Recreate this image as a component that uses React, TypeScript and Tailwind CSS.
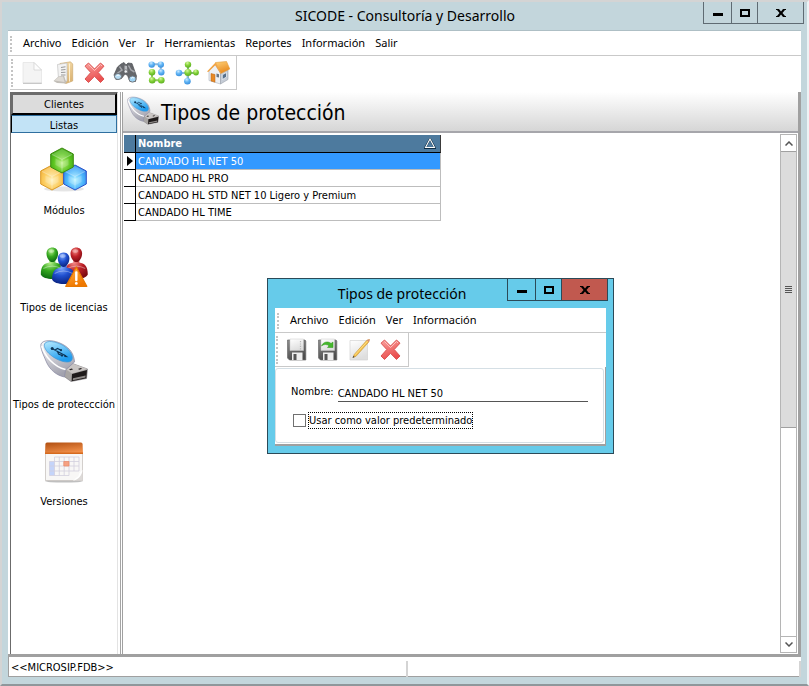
import type { ReactNode } from "react";
import clsx from "clsx";

const MAIN_MENU = ["Archivo", "Edición", "Ver", "Ir", "Herramientas", "Reportes", "Información", "Salir"];
const DIALOG_MENU = ["Archivo", "Edición", "Ver", "Información"];
const ROWS = ["CANDADO HL NET 50", "CANDADO HL PRO", "CANDADO HL STD NET 10 Ligero y Premium", "CANDADO HL TIME"];

/* ---------- icons ---------- */

function Svg({ size, className, children }: { size: number; className?: string; children: ReactNode }) {
  return (
    <svg viewBox={`0 0 ${size} ${size}`} className={clsx("shrink-0", className)} aria-hidden="true">
      {children}
    </svg>
  );
}

function Gradients() {
  const pairs: [string, string, string][] = [
    ["gOrange", "#ffb547", "#f07800"],
    ["gRed", "#f9a09c", "#ea4f4f"],
    ["gPaper", "#ffffff", "#dedede"],
    ["gMetal", "#fafafc", "#a2a2ae"],
    ["gScreen", "#b9ebff", "#1f9df0"],
    ["gHeader", "#b04e10", "#f2904a"],
    ["gDisk", "#8d8d8d", "#4d4d4d"],
    ["gFolder", "#f9e3b4", "#ddb676"],
    ["gRoof", "#ffd27a", "#e98a1e"],
  ];
  const balls: [string, string, string, string][] = [
    ["bGreen", "#b5f08a", "#35a81f", "#0c6b10"],
    ["bRed", "#f58a86", "#bf2228", "#7d0a12"],
    ["bBlue", "#7fa9ff", "#1f4fcf", "#0a2380"],
    ["bLime", "#d8f7a0", "#84d33a", "#5cae20"],
    ["bSky", "#cdeaff", "#5fb4f5", "#3a8fdc"],
    ["cGreen", "#b8f07c", "#5cc41f", "#2f9410"],
    ["cYellow", "#fff0b4", "#fbcb5c", "#eda62e"],
    ["cBlue", "#b4f4ff", "#4bb4fb", "#2166dc"],
  ];
  return (
    <svg className="absolute size-0" aria-hidden="true">
      <defs>
        {pairs.map(([id, a, b]) => (
          <linearGradient key={id} id={id} x1="0" y1="0" x2="0.4" y2="1">
            <stop offset="0" stopColor={a} />
            <stop offset="1" stopColor={b} />
          </linearGradient>
        ))}
        {balls.map(([id, a, b, c]) => (
          <radialGradient key={id} id={id} cx={id[0] === "c" ? "0.5" : "0.4"} cy={id[0] === "c" ? "0.6" : "0.25"} r="0.75">
            <stop offset="0" stopColor={a} />
            <stop offset="0.5" stopColor={b} />
            <stop offset="1" stopColor={c} />
          </radialGradient>
        ))}
      </defs>
    </svg>
  );
}

function Cube({ x, y, fill, edge }: { x: number; y: number; fill: string; edge: string }) {
  return (
    <g transform={`translate(${x} ${y})`} strokeLinejoin="round">
      <path d="M0-12.5 11.3-6.5V6.5L0 12.5-11.3 6.5V-6.5Z" fill={`url(#${fill})`} stroke={edge} strokeWidth="1" />
      <path d="M0-11.5 10-6 0-1-10-6Z" fill="#fff" opacity="0.18" />
      <path d="M0-1V11M0-1-10-6M0-1 10-6" stroke="#fff" strokeWidth="0.7" opacity="0.45" />
      <path d="M-6.5-2 0 1.500 6.500-2V4.500L0 8-6.500 4.500Z" fill="#fff" opacity="0.18" />
    </g>
  );
}

function ModulesIcon() {
  return (
    <Svg size={48} className="size-12">
      <ellipse cx="24" cy="44" rx="20" ry="2.5" fill="#000" opacity="0.1" />
      <Cube x={12} y={32.5} fill="cYellow" edge="#d99a2a" />
      <Cube x={35} y={32.5} fill="cBlue" edge="#2b52c8" />
      <Cube x={22} y={15.5} fill="cGreen" edge="#3f8d12" />
    </Svg>
  );
}

function Person({ x, y, fill }: { x: number; y: number; fill: string }) {
  return (
    <g transform={`translate(${x} ${y})`}>
      <path d="M-3 3H3V8C8 9 11.5 11 11.5 20C9 26-9 26-11.5 20C-11.5 11-8 9-3 8Z" fill={`url(#${fill})`} />
      <path d="M-5.800-1C-5.800-9 5.800-9 5.800-1C5.800 3 3 7.500 0 7.500C-3 7.500-5.800 3-5.800-1Z" fill={`url(#${fill})`} />
      <path d="M-9 14Q0 9 9 14" stroke="#fff" strokeWidth="1.2" fill="none" opacity="0.35" />
      <ellipse cx="-1" cy="-3.6" rx="3" ry="1.8" fill="#fff" opacity="0.35" />
    </g>
  );
}

function LicensesIcon() {
  return (
    <Svg size={48} className="size-12">
      <Person x={12.3} y={12.6} fill="bGreen" />
      <Person x={36.3} y={12.6} fill="bRed" />
      <Person x={23.6} y={17.5} fill="bBlue" />
      <path d="M36.3 25 46.8 44.4H25.8Z" fill="url(#gOrange)" stroke="#e87800" strokeWidth="1.2" strokeLinejoin="round" />
      <path d="M36.3 30.5V38" stroke="#fff" strokeWidth="2.4" strokeLinecap="round" />
      <circle cx="36.3" cy="41.4" r="1.4" fill="#fff" />
    </Svg>
  );
}

function UsbIcon({ className }: { className: string }) {
  return (
    <Svg size={48} className={className}>
      <path d="M24 29 31 24 47.5 30 46.5 39.5 31 42.5 23.5 37Z" fill="#a9a6a4" stroke="#77737a" strokeWidth="0.6" />
      <path d="M24 29 31 24 47.5 30 32 34.6Z" fill="#c9c5c3" />
      <path d="M32 35 47 31 46.3 39.3 31.6 42.2Z" fill="#1f1b1b" />
      <path d="M33 39.2 45.6 36.6 45.4 38.6 32.8 41.2Z" fill="#8e8a88" />
      <path d="m29 30.4 2.600-1 1.600.8-2.600 1ZM38 30l2.600-1 1.600.8-2.600 1Z" fill="#2a2626" />
      <path
        d="M1 5C3 .5 13 .5 22 5C30 9 34 15 34.5 23L25.5 31L24.5 38C17 36.5 9.5 31 6 22C3.5 16 0 9 1 5Z"
        fill="url(#gMetal)"
        stroke="#8e8ea6"
        strokeWidth="0.8"
      />
      <path d="M25.5 30.5C14 28 4.5 17 1.8 7" stroke="#fff" strokeWidth="1.6" fill="none" />
      <path d="M4.5 5C6 1 16 2 24 7C31 11.5 34.5 19 31 22C27 25 16 21 10 15.5C6.5 12.5 3.5 8 4.5 5Z" fill="url(#gScreen)" stroke="#3f95d2" strokeWidth="0.7" />
      <path d="M12 9.5 26 17M15 11 17.5 9.5 20.5 11M17.5 12.5 18.5 15 22 16.5" stroke="#0d3557" strokeWidth="1.1" fill="none" />
      <path d="m24.500 15.500 4 2.800-4.200-.2Z" fill="#0d3557" />
      <circle cx="12.2" cy="9.5" r="1.5" fill="#0d3557" />
      <circle cx="21" cy="11.2" r="1.1" fill="#0d3557" />
      <circle cx="22" cy="16.6" r="1.1" fill="#0d3557" />
    </Svg>
  );
}

function CalendarIcon() {
  return (
    <Svg size={48} className="size-12">
      <ellipse cx="24" cy="45" rx="19" ry="1.6" fill="#000" opacity="0.25" />
      <path d="M5.5 17H42.5V44.5H5.5Z" fill="#f8f7f6" stroke="#c9c4c0" strokeWidth="0.8" />
      <path d="M7 6.5H41Q42.5 6.5 42.6 8L43 18H5L5.4 8Q5.5 6.5 7 6.5Z" fill="url(#gHeader)" />
      <path d="M5 16.5H43V18H5Z" fill="#d66a1e" />
      <path d="M9.5 25.5H14.5V39.5H9.5Z" fill="#c4d4fa" />
      <path
        d="M14.5 21H39V35H9.5M9.5 25.5H39M9.5 30H39M9.5 25.5V39.5H29V21M14.5 21V39.5M19.3 21V39.5M24.2 21V39.5M34 21V35"
        stroke="#d2cfde"
        strokeWidth="0.8"
        fill="none"
      />
      <path d="M23.8 25.5H29V30H23.8Z" fill="#f5a183" stroke="#ea8a68" strokeWidth="0.7" />
      <path d="M42.5 34C41 39 38 42 33 44.5H42.5Z" fill="#dddad8" />
      <path d="M42.5 34C40 36 39 37 38.5 40C37 41 35 43 33 44.5C38 44 42 40 42.5 34Z" fill="#fff" />
    </Svg>
  );
}

function NewIcon() {
  return (
    <Svg size={24} className="size-6">
      <path d="M3 1.5H14L21.5 9V22H3Z" fill="#f4f4f4" stroke="#e4e4e4" strokeWidth="0.8" />
      <path d="M14 1.5V9H21.5Z" fill="#fdfdfd" stroke="#cfcfcf" strokeWidth="0.7" />
      <path d="M3 22.3H21.8" stroke="#bdbdbd" />
    </Svg>
  );
}

function OpenIcon() {
  return (
    <Svg size={24} className="size-6">
      <path d="M9 2.5 19.5.8 21.7 3V20L15 22.5 9 20Z" fill="url(#gFolder)" stroke="#caa468" strokeWidth="0.6" />
      <path d="M6.5 3.5 16 2V20.5L7.5 18Z" fill="#f3f3f3" stroke="#b9b9b9" strokeWidth="0.6" />
      <path d="M10 6.5 14.5 5.8M10 9 14.5 8.5M10 11.5 14.5 11.2M10 14 14.5 14" stroke="#9a9a9a" strokeWidth="1.1" />
      <path d="M2.5 20 7.5 15.5 13 14.500 15.500 22.500 6 22Z" fill="#c2beb8" />
      <path d="M3.5 19.5 7.8 16 12 15.500 13.500 21Z" fill="#dedad4" />
      <path d="M18.5 2.5V20.5" stroke="#fff4d8" strokeWidth="0.9" />
    </Svg>
  );
}

function DeleteIcon() {
  return (
    <Svg size={24} className="size-6">
      <path
        d="M6.5 2 12.5 8 18.5 2 22 5.200 16.200 11.500 22 18 18.500 21.500 12.500 15.300 6.500 21.500 3 18 8.800 11.500 3 5.200Z"
        fill="url(#gRed)"
        stroke="#dc5452"
        strokeWidth="1"
        strokeLinejoin="round"
      />
      <path d="M6.5 3.5 12.5 9.6 18.5 3.5 20 5" stroke="#ffc4c0" strokeWidth="1" fill="none" />
    </Svg>
  );
}

function BinocularsIcon() {
  return (
    <Svg size={24} className="size-6">
      <path d="M8 3 11 1.5 13 4 15 2 19 2.5 23.5 15 22.5 20.5H17L14.5 14.5 12 13 8.5 17.5 3 18.5 1 14 4.5 6Z" fill="#65676b" stroke="#4e5054" strokeWidth="0.7" />
      <path d="M6.5 5.5 9 9 4 12.5M15.5 4.5 18 9 21.5 11" stroke="#a4a6ab" strokeWidth="1.5" fill="none" />
      <path d="M11.5 4.5 14 5 14.5 12 11.5 12Z" fill="#b9bbbf" />
      <circle cx="12.8" cy="10.5" r="1.7" fill="#eceef0" stroke="#505257" strokeWidth="0.6" />
      <ellipse cx="5" cy="15.5" rx="3.5" ry="3" fill="#b7ddf4" stroke="#70747a" strokeWidth="1" />
      <ellipse cx="19.5" cy="18" rx="3.6" ry="3.1" fill="#9ed2f2" stroke="#70747a" strokeWidth="1" />
      <path d="M3.5 14.8Q5 13.5 6.5 14.5M18 17.3Q19.5 16 21 17" stroke="#fff" strokeWidth="0.9" fill="none" />
    </Svg>
  );
}

function NodesIcon() {
  return (
    <Svg size={24} className="size-6">
      <path d="M7.7 3.3H16.8V11" stroke="#8bb7dc" strokeWidth="2" fill="none" />
      <path d="M8 11V19.3H17.3" stroke="#8fc85c" strokeWidth="2" fill="none" />
      <circle cx="7.7" cy="3.6" r="3.2" fill="url(#bSky)" />
      <circle cx="16.8" cy="3.6" r="3.2" fill="url(#bSky)" />
      <circle cx="17.3" cy="11.3" r="3.2" fill="url(#bSky)" />
      <circle cx="8" cy="11.3" r="3.3" fill="url(#bLime)" />
      <circle cx="8.2" cy="19.3" r="3.3" fill="url(#bLime)" />
      <circle cx="17.3" cy="19.3" r="3.3" fill="url(#bLime)" />
    </Svg>
  );
}

function NetworkIcon() {
  return (
    <Svg size={24} className="size-6">
      <path d="M13 3.5V20M4.3 12H21" stroke="#7fba6c" strokeWidth="2" fill="none" />
      <path d="M4.3 12H10M12.6 14V20" stroke="#8bb7dc" strokeWidth="2" fill="none" />
      <circle cx="13" cy="3.6" r="3.2" fill="url(#bLime)" />
      <circle cx="21" cy="11.5" r="2.9" fill="url(#bLime)" />
      <circle cx="13" cy="11.5" r="3.6" fill="url(#bLime)" />
      <circle cx="4" cy="12" r="3.3" fill="url(#bSky)" />
      <circle cx="12.4" cy="20.2" r="3.3" fill="url(#bSky)" />
    </Svg>
  );
}

function HouseIcon() {
  return (
    <Svg size={24} className="size-6">
      <path d="M3 10 9 3.5 14.5 12V23L3 19.5Z" fill="#eef1f5" stroke="#a9b0b8" strokeWidth="0.6" />
      <path d="M14.5 12 22 8V18.5L14.5 23Z" fill="#c5ccd6" stroke="#98a0aa" strokeWidth="0.6" />
      <path d="M9.5 1.5 20.5.5 23.8 8 14.8 12.5Z" fill="url(#gRoof)" stroke="#e29a3a" strokeWidth="0.6" />
      <path d="M9.5 1.5 1 10.5 2.3 11 9.3 4.3 14.3 12.5 15 12Z" fill="#f2a545" />
      <path d="M5 12.5 9 13.5V21.2L5 20Z" fill="#e88a26" stroke="#b9661a" strokeWidth="0.5" />
      <path d="M10.5 12.5 13 13.2V16.5L10.5 16Z" fill="#6a7684" />
      <path d="M16.3 13.8 20.5 11.5V16L16.3 18.5Z" fill="#56708c" stroke="#f6f8fa" strokeWidth="0.7" />
    </Svg>
  );
}

function SaveIcon({ refresh }: { refresh?: boolean }) {
  return (
    <Svg size={24} className="size-6">
      <path d="M2.5 2H20L20.800 3V22H4.500L2.500 20Z" fill="url(#gDisk)" stroke="#6b6b6b" strokeWidth="0.7" />
      <path d="M5 1H18.500V12.500H5Z" fill="url(#gPaper)" stroke="#c8c8c8" strokeWidth="0.5" />
      {refresh ? (
        <path d="M5.500 8C7 3.500 12.500 3 15 5.500L17 4V9.500H11.500L13 7.800C11 6 8 6 5.500 8Z" fill="#45b82c" stroke="#2c9418" strokeWidth="0.5" />
      ) : (
        <path d="M15.500 3V12" stroke="#b5b5b5" strokeWidth="1.2" strokeDasharray="1.2 1.200" />
      )}
      <path d="M7 14.5H17.5V22H7Z" fill="#eeeeee" />
      <path d="M8.5 16H11.5V22H8.5Z" fill="#555" />
    </Svg>
  );
}

function EditIcon() {
  return (
    <Svg size={24} className="size-6">
      <path d="M3 2.5H20.5V22H3Z" fill="url(#gPaper)" stroke="#d2d2d2" strokeWidth="0.7" />
      <path d="M19.8 2.300 22.500 1.500 21.800 4 9 18.300 6 19.500 7.200 16.500Z" fill="#f5c04a" stroke="#b98724" strokeWidth="0.5" />
      <path d="M8 16.8 20.5 3.2" stroke="#ffe9a0" strokeWidth="0.7" />
      <path d="M5.500 20 6.500 17.800 7.700 19Z" fill="#444" />
      <path d="m19.800 2.100 2.700-.9-.6 3Z" fill="#d88a7a" />
    </Svg>
  );
}

/* ---------- window pieces ---------- */

function WindowButtons({ dialog }: { dialog?: boolean }) {
  return (
    <div
      className={clsx(
        "flex h-[22px] divide-x border border-t-0",
        dialog ? "mr-[5px] divide-[#2b4a58] border-[#2b4a58]" : "mr-[3px] divide-[#5f6b73] border-[#5f6b73]",
      )}
    >
      <button aria-label="Minimizar" className="flex w-7 items-center justify-center">
        <span className="mt-1 h-[3px] w-[10px] bg-black" />
      </button>
      <button aria-label="Maximizar" className="flex w-[26px] items-center justify-center">
        <span className="h-2 w-[10px] border-2 border-black" />
      </button>
      <button aria-label="Cerrar" className={clsx("flex w-[45px] items-center justify-center", dialog && "bg-[#c1594f]")}>
        <svg viewBox="0 0 10 8" className="h-2 w-[10px]">
          <path d="M0 0H3L5 2.5 7 0H10V1H9L6.5 4 9 7H10V8H7L5 5.5 3 8H0V7H1L3.5 4 1 1H0Z" fill="#000" />
        </svg>
      </button>
    </div>
  );
}

function Grip({ className }: { className: string }) {
  return <span className={clsx("w-0 border-l-2 border-dotted border-[#c4c4c4]", className)} />;
}

function MenuBar({ items }: { items: string[] }) {
  return (
    <nav className="flex h-[25px] items-center border-b border-[#c9c9c9] bg-white px-[2px] pt-px font-['Noto_Sans',sans-serif] text-[11px]">
      <Grip className="h-4" />
      <div className="flex gap-[10px] pl-[11px]">
        {items.map((item) => (
          <button key={item}>{item}</button>
        ))}
      </div>
    </nav>
  );
}

function Toolbar({ items }: { items: [string, ReactNode][] }) {
  return (
    <div className="flex h-[34px] w-fit items-center gap-[7px] border-r border-b border-[#c9c9c9] pr-[6px] pl-px">
      <Grip className="h-7" />
      {items.map(([label, icon]) => (
        <button key={label} aria-label={label}>
          {icon}
        </button>
      ))}
    </div>
  );
}

function SidebarItem({ label, icon }: { label: string; icon: ReactNode }) {
  return (
    <button className="flex h-[97px] w-full flex-col items-center gap-[10px] pt-3 leading-4 whitespace-nowrap">
      {icon}
      <span>{label}</span>
    </button>
  );
}

function Sidebar() {
  return (
    <aside className="flex w-[113px] shrink-0 flex-col border-r border-[#a5a5a5] pl-[2px]">
      <div className="mr-[2px] flex flex-1 flex-col border-t border-r border-l border-t-[#6b6b6b] border-r-[#e3e3e3] border-l-[#6b6b6b]">
        <button className="h-[22px] border-2 border-t-[#6b6b6b] border-r-black border-b-black border-l-[#6b6b6b] bg-[#dcdcdc] pt-px leading-4">
          Clientes
        </button>
        <button className="h-[18px] border border-[#2f6f9f] border-l-black bg-[#c2e3f6] pt-[3px] leading-[13px]">
          Listas
        </button>
        <SidebarItem label="Módulos" icon={<ModulesIcon />} />
        <SidebarItem label="Tipos de licencias" icon={<LicensesIcon />} />
        <SidebarItem label="Tipos de proteccción" icon={<UsbIcon className="size-12" />} />
        <SidebarItem label="Versiones" icon={<CalendarIcon />} />
      </div>
    </aside>
  );
}

function ProtectionTable() {
  return (
    <table className="w-[317px] border-separate border-spacing-0 text-left">
      <thead>
        <tr className="h-[18px] bg-[#4d7a9e] text-white">
          <th className="w-3 border-r border-b border-black p-0" aria-label="Selección" />
          <th className="border-r border-b border-black border-r-[#3a3a3a] py-0 pr-1 pl-[2px]">
            <span className="flex items-center justify-between leading-4">
              Nombre
              <svg viewBox="0 0 12 11" className="h-[11px] w-3">
                <path d="M6 1 11 10H1Z" fill="none" stroke="#0c2c44" strokeWidth="2" />
                <path d="M6 1 10.500 9.500H1.500Z" fill="none" stroke="#fff" strokeWidth="1.1" />
              </svg>
            </span>
          </th>
        </tr>
      </thead>
      <tbody>
        {ROWS.map((name, i) => (
          <tr key={name} className={clsx("h-[17px]", i === 0 && "bg-[#3399ff] text-white")}>
            <td className="border-r border-b border-black bg-white p-0">
              {i === 0 && (
                <svg viewBox="0 0 6 10" className="ml-[3px] h-[10px] w-[6px]">
                  <path d="M0 0 6 5 0 10Z" fill="#000" />
                </svg>
              )}
            </td>
            <td className="border-r border-b border-[#bdbdbd] pt-[2px] pb-0 pl-[2px] leading-[14px] whitespace-nowrap">{name}</td>
          </tr>
        ))}
      </tbody>
    </table>
  );
}

function Scrollbar() {
  return (
    <div className="mt-px mr-px mb-px flex w-[17px] shrink-0 flex-col border border-[#b5b5b5]">
      <button aria-label="Subir" className="flex h-4 items-center justify-center">
        <svg viewBox="0 0 8 5" className="h-[5px] w-2">
          <path d="M.5 4.5 4 1 7.5 4.5" fill="none" stroke="#555" strokeWidth="1.5" />
        </svg>
      </button>
      <div className="flex flex-[276] flex-col items-center justify-center gap-px border-y border-[#a0a0a0] bg-[#dcdcdc]">
        {[0, 1, 2, 3].map((n) => (
          <span key={n} className="h-px w-[7px] bg-[#555]" />
        ))}
      </div>
      <div className="flex-[209]" />
      <button aria-label="Bajar" className="flex h-4 items-center justify-center border-t border-[#b5b5b5]">
        <svg viewBox="0 0 8 5" className="h-[5px] w-2">
          <path d="M.5.5 4 4 7.5.5" fill="none" stroke="#555" strokeWidth="1.5" />
        </svg>
      </button>
    </div>
  );
}

function ProtectionDialog() {
  return (
    <section
      role="dialog"
      aria-label="Tipos de protección"
      className="absolute top-[276px] left-[265px] w-[347px] border border-[#2b4a58] bg-[#66cbea] pb-[7px]"
    >
      <header className="flex h-[29px] items-start">
        <h2 className="flex-1 pl-[29px] text-center font-['Noto_Sans',sans-serif] text-[14px] leading-[30px]">Tipos de protección</h2>
        <WindowButtons dialog />
      </header>
      <div className="mx-[7px] bg-white">
        <MenuBar items={DIALOG_MENU} />
        <Toolbar
          items={[
            ["Guardar", <SaveIcon />],
            ["Guardar y nuevo", <SaveIcon refresh />],
            ["Editar", <EditIcon />],
            ["Eliminar", <DeleteIcon />],
          ]}
        />
        <div className="border-r border-b-2 border-[#a0a0a0] pt-px pr-px pb-px">
          <form className="rounded-[3px] border border-[#d5dfe5] pt-[13px] pr-[15px] pb-[13px] pl-[15px]">
            <div className="flex h-5 items-center gap-1">
              <label htmlFor="nombre" className="leading-4">Nombre:</label>
              <input
                id="nombre"
                defaultValue="CANDADO HL NET 50"
                className="h-5 min-w-0 flex-1 border-b border-[#555] pt-1 outline-none"
              />
            </div>
            <label className="mt-[10px] flex h-[17px] items-center gap-[2px]">
              <input type="checkbox" className="ml-[2px] size-[13px] appearance-none border border-[#707070] bg-white" />
              <span className="border border-dotted border-black leading-[15px] whitespace-nowrap">
                Usar como valor predeterminado
              </span>
            </label>
          </form>
        </div>
      </div>
    </section>
  );
}

export default function App() {
  return (
    <div className="relative flex min-h-screen flex-col border-2 border-t-[#d4d4d4] border-r-[#eef3f5] border-b-[#8f979b] border-l-[#d4d4d4] bg-[#c3d6dc] font-['DejaVu_Sans_Condensed','DejaVu_Sans',sans-serif] text-[11px] text-black">
      <Gradients />
      <header className="flex h-7 items-start">
        <h1 className="flex-1 pl-[105px] text-center font-['Noto_Sans',sans-serif] text-[14px] leading-7">
          SICODE - Consultoría y Desarrollo
        </h1>
        <WindowButtons />
      </header>

      <div className="mx-[6px] mb-[7px] flex flex-1 flex-col border-t border-[#aebfc5] bg-white">
        <MenuBar items={MAIN_MENU} />
        <div className="pl-[2px]">
          <Toolbar
            items={[
              ["Nuevo", <NewIcon />],
              ["Abrir", <OpenIcon />],
              ["Eliminar", <DeleteIcon />],
              ["Buscar", <BinocularsIcon />],
              ["Organizar", <NodesIcon />],
              ["Relaciones", <NetworkIcon />],
              ["Inicio", <HouseIcon />],
            ]}
          />
        </div>

        <div className="flex flex-1 border-b-[3px] border-[#a0a0a0] pt-[2px]">
          <Sidebar />
          <main className="ml-px flex min-w-0 flex-1 flex-col border-r-[3px] border-l border-[#a0a0a0]">
            <div className="flex h-[41px] shrink-0 items-center border-b-2 border-[#a6a6ab] bg-linear-to-b from-white to-[#d6d6d6] pl-1">
              <UsbIcon className="size-8" />
              <h2 className="pt-1 pl-[2px] text-[21px]">Tipos de protección</h2>
            </div>
            <div className="flex flex-1">
              <div className="min-w-0 flex-1 pt-[2px] pl-px">
                <ProtectionTable />
              </div>
              <Scrollbar />
            </div>
          </main>
        </div>

        <footer className="flex h-5 items-center border-b border-l border-[#a0a0a0] pt-1 pl-[2px]">
          <span className="w-1/2">&lt;&lt;MICROSIP.FDB&gt;&gt;</span>
          <span className="h-4 flex-1 border-r-2 border-l-2 border-[#d4d4d4]" />
        </footer>
      </div>

      <ProtectionDialog />
    </div>
  );
}
